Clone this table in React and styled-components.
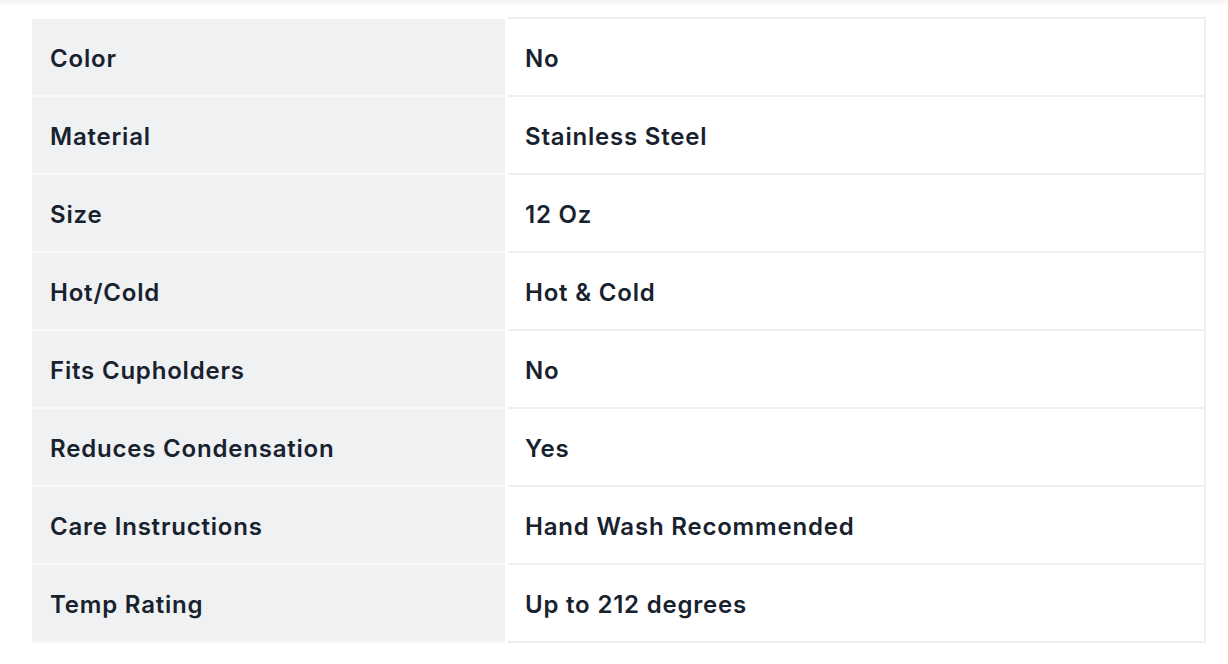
import React from "react";
import styled, { createGlobalStyle } from "styled-components";

const GlobalStyle = createGlobalStyle`
  body {
    margin: 0;
    background: #ffffff;
    font-family: Inter, "Open Sans", sans-serif;
  }
`;

const TopStrip = styled.div`
  height: 4px;
  background: linear-gradient(#f4f4f4, #fafafa);
`;

const Table = styled.div`
  display: flex;
  flex-direction: column;
  margin: 13px 22px 0 32px;
`;

const Row = styled.div`
  display: grid;
  grid-template-columns: 473px 1fr;
  column-gap: 3px;
`;

const Label = styled.div`
  display: flex;
  align-items: center;
  height: 76px;
  padding-left: 18px;
  padding-top: 2px;
  box-sizing: border-box;
  margin-top: ${(p) => (p.first ? "2px" : "0")};
  background-color: #eff1f3;
  border-bottom: 2px solid #f8f9fa;
  color: #18222e;
  font-size: 24px;
  font-weight: 600;
  letter-spacing: 0.8px;
  height: 78px;
`;

const Value = styled(Label)`
  margin-top: 0;
  padding-left: 17px;
  background-color: #ffffff;
  border-top: ${(p) => (p.first ? "2px solid #efefef" : "none")};
  border-right: 2px solid #efefef;
  border-bottom: 2px solid #efefef;
  height: ${(p) => (p.first ? "80px" : "78px")};
`;

const specs = [
  ["Color", "No"],
  ["Material", "Stainless Steel"],
  ["Size", "12 Oz"],
  ["Hot/Cold", "Hot & Cold"],
  ["Fits Cupholders", "No"],
  ["Reduces Condensation", "Yes"],
  ["Care Instructions", "Hand Wash Recommended"],
  ["Temp Rating", "Up to 212 degrees"],
];

export default function App() {
  return (
    <>
      <GlobalStyle />
      <TopStrip />
      <Table>
        {specs.map(([name, value], i) => (
          <Row key={name}>
            <Label first={i === 0}>{name}</Label>
            <Value first={i === 0}>{value}</Value>
          </Row>
        ))}
      </Table>
    </>
  );
}
